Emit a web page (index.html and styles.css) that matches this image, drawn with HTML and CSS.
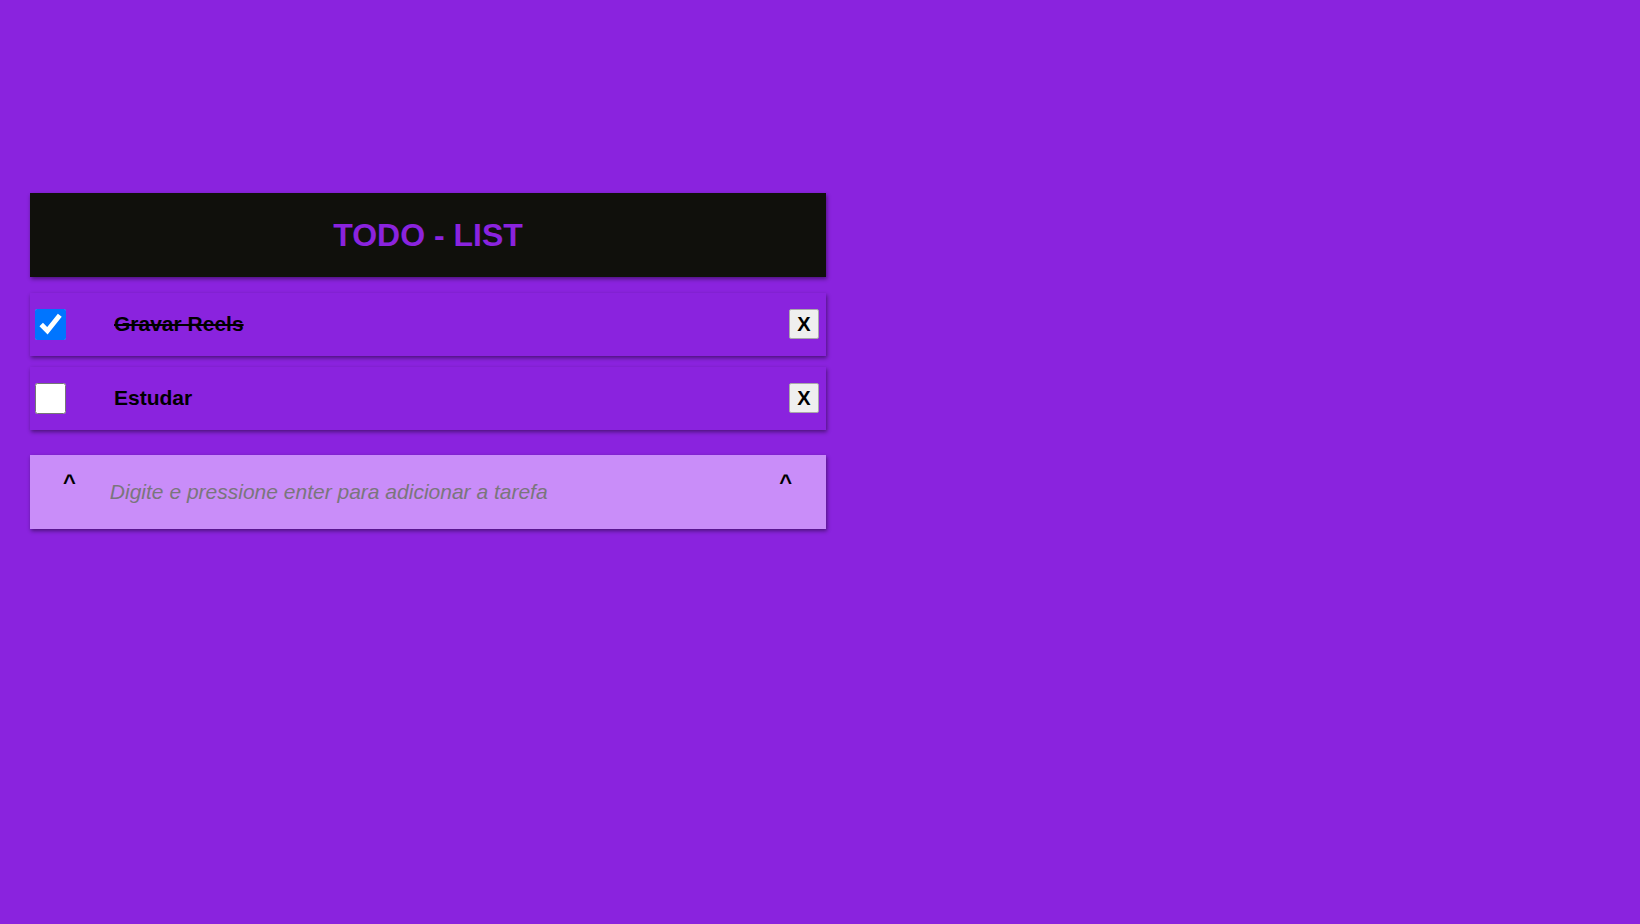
FILE: index.html
```html
<!DOCTYPE html>
<html lang="pt-BR">
<head>
<meta charset="utf-8">
<title>TODO - LIST</title>
<link rel="stylesheet" href="styles.css">
</head>
<body>
<main class="todo">
  <header class="todo-header">
    <h1 class="todo-title">TODO - LIST</h1>
  </header>
  <ul class="todo-list">
    <li class="todo-item done">
      <input class="todo-check" type="checkbox" checked>
      <span class="todo-text">Gravar Reels</span>
      <button class="todo-remove" type="button">X</button>
    </li>
    <li class="todo-item">
      <input class="todo-check" type="checkbox">
      <span class="todo-text">Estudar</span>
      <button class="todo-remove" type="button">X</button>
    </li>
  </ul>
  <div class="new-row">
    <span class="caret">^</span>
    <input class="new-input" type="text" placeholder="Digite e pressione enter para adicionar a tarefa">
    <span class="caret">^</span>
  </div>
</main>
</body>
</html>
```
FILE: styles.css
```css
html, body {
  margin: 0;
  padding: 0;
}

body {
  background: #8a23de;
  font-family: "Liberation Sans", Arial, sans-serif;
  min-height: 924px;
}

.todo {
  width: 796px;
  padding: 193px 0 0 30px;
  display: flex;
  flex-direction: column;
}

.todo-header {
  height: 84px;
  background: #10100c;
  box-shadow: 1px 2px 4px rgba(0, 0, 0, 0.45);
  display: flex;
  align-items: center;
  justify-content: center;
}

.todo-title {
  margin: 0;
  font-size: 32px;
  font-weight: bold;
  color: #8a23de;
}

.todo-list {
  list-style: none;
  margin: 16px 0 0;
  padding: 0;
  display: flex;
  flex-direction: column;
  gap: 11px;
}

.todo-item {
  height: 63px;
  box-sizing: border-box;
  padding: 0 7px 0 5px;
  display: flex;
  align-items: center;
  background: #8a23de;
  box-shadow: 1px 2px 4px rgba(0, 0, 0, 0.45);
}

.todo-check {
  width: 31px;
  height: 31px;
  margin: 0;
}

.todo-text {
  margin: 0 0 2px 48px;
  flex: 1;
  font-size: 21px;
  font-weight: bold;
  color: #000;
}

.todo-item.done .todo-text {
  text-decoration: line-through;
}

.todo-remove {
  width: 30px;
  height: 30px;
  margin-bottom: 2px;
  padding: 0;
  box-sizing: border-box;
  background: #efefef;
  border: 1px solid #a9a9a9;
  border-radius: 2px;
  font-family: "Liberation Sans", Arial, sans-serif;
  font-size: 20px;
  font-weight: bold;
  color: #000;
  line-height: 1;
}

.new-row {
  margin-top: 25px;
  height: 74px;
  background: #c98df9;
  box-shadow: 1px 2px 4px rgba(0, 0, 0, 0.45);
  display: flex;
  align-items: center;
  padding: 0 34px 0 33px;
}

.caret {
  align-self: flex-start;
  margin-top: 17px;
  font-size: 22px;
  line-height: 1;
  font-weight: bold;
  color: #000;
}

.new-input {
  flex: 1;
  margin: 0 0 0 34px;
  padding: 0;
  border: none;
  background: transparent;
  outline: none;
  font-family: "Liberation Sans", Arial, sans-serif;
  font-size: 21px;
  font-style: italic;
  color: #000;
}

.new-input::placeholder {
  color: #7a767c;
  font-style: italic;
}
```
